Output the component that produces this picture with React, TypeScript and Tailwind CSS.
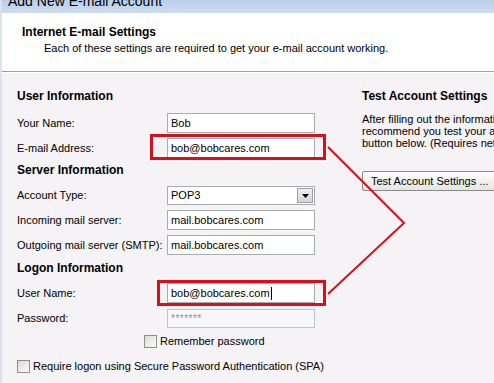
import React from 'react';

const font = { fontFamily: '"Liberation Sans", Tahoma, sans-serif' };

const Input = ({ value, caret, className = '' }: { value: string; caret?: boolean; className?: string }) => (
  <div
    className={`w-[148px] h-[20px] border border-[#a5acb2] bg-white px-[3px] flex items-center text-[11px] text-black ${className}`}
  >
    {value}
    {caret && <span className="inline-block w-px h-[13px] bg-black ml-px" />}
  </div>
);

const Checkbox = () => (
  <span className="inline-block w-[13px] h-[13px] border border-[#8f8f8f] bg-gradient-to-br from-[#dcdcd6] to-[#fbfbf9] shrink-0" />
);

const Row = ({ label, children }: { label: string; children: React.ReactNode }) => (
  <div className="flex items-center h-[20px]">
    <span className="w-[150px] text-[11px]">{label}</span>
    {children}
  </div>
);

export default function App() {
  return (
    <div
      className="w-[494px] h-[383px] overflow-hidden relative bg-[#f5f3f6] text-black border-l-2 border-[#d9e2ee]"
      style={font}
    >
      {/* title bar */}
      <div className="h-[13px] overflow-hidden bg-gradient-to-b from-[#b9cfe9] to-[#cddcf0]">
        <div className="pl-[6px] mt-[-7px] text-[14px] leading-[17px] text-black">Add New E-mail Account</div>
      </div>

      {/* header */}
      <div className="bg-white h-[59px] border-b border-[#a0a0a0] pt-[12px]">
        <div className="pl-[20px] text-[12px] font-bold leading-[14px]">Internet E-mail Settings</div>
        <div className="pl-[42px] mt-[2px] text-[11px] leading-[14px]">
          Each of these settings are required to get your e-mail account working.
        </div>
      </div>
      <div className="h-px bg-white" />

      <div className="flex">
        {/* left column */}
        <div className="w-[343px] shrink-0 pl-[15px] pt-[16px] whitespace-nowrap">
          <div className="text-[12px] font-bold leading-[14px]">User Information</div>
          <div className="mt-[10px] flex flex-col gap-[5px]">
            <Row label="Your Name:">
              <Input value="Bob" />
            </Row>
            <Row label="E-mail Address:">
              <div className="relative">
                <Input value="bob@bobcares.com" />
                <div className="absolute left-[-17px] right-[-11px] top-[-4px] bottom-[-2px] border-[3px] border-[#d8101c]" />
              </div>
            </Row>
          </div>

          <div className="mt-[5px] text-[12px] font-bold leading-[14px]">Server Information</div>
          <div className="mt-[9px] flex flex-col gap-[5px]">
            <div className="flex items-center h-[19px]">
              <span className="w-[150px] text-[11px]">Account Type:</span>
              <div className="w-[148px] h-[19px] border border-[#a5acb2] bg-white pl-[3px] flex items-center justify-between text-[11px]">
                POP3
                <span className="w-[16px] h-[15px] mr-px border border-[#a0a0a0] bg-gradient-to-b from-[#f0f0f0] to-[#d4d4d4] flex items-center justify-center">
                  <svg width="7" height="4" viewBox="0 0 7 4">
                    <path d="M0 0h7L3.5 4z" fill="#000" />
                  </svg>
                </span>
              </div>
            </div>
            <Row label="Incoming mail server:">
              <Input value="mail.bobcares.com" />
            </Row>
            <Row label="Outgoing mail server (SMTP):">
              <Input value="mail.bobcares.com" />
            </Row>
          </div>

          <div className="mt-[6px] text-[12px] font-bold leading-[14px]">Logon Information</div>
          <div className="mt-[8px] flex flex-col gap-[6px]">
            <Row label="User Name:">
              <div className="relative">
                <Input value="bob@bobcares.com" caret />
                <div className="absolute left-[-10px] right-[-11px] top-[-3px] bottom-[-3px] border-[3px] border-[#d8101c]" />
              </div>
            </Row>
            <div className="flex items-center h-[19px]">
              <span className="w-[150px] text-[11px]">Password:</span>
              <div className="w-[148px] h-[19px] border border-[#b7c4d9] bg-[#f6f7fa] px-[3px] flex items-center text-[10px] text-[#8a8f99] tracking-[0.5px]">
                *******
              </div>
            </div>
          </div>

          <div className="mt-[7px] pl-[127px] flex items-center gap-[3px] text-[11px] h-[13px]">
            <Checkbox />
            Remember password
          </div>
          <div className="mt-[12px] flex items-center gap-[3px] text-[11px] h-[13px]">
            <Checkbox />
            Require logon using Secure Password Authentication (SPA)
          </div>
        </div>

        {/* right column */}
        <div className="pl-[17px] pt-[16px] whitespace-nowrap">
          <div className="text-[12px] font-bold leading-[14px]">Test Account Settings</div>
          <div className="mt-[10px] text-[11px] leading-[12px]">
            <div>After filling out the information on this screen, we</div>
            <div>recommend you test your account by clicking the</div>
            <div>button below. (Requires network connection)</div>
          </div>
          <div className="mt-[22px] w-[150px] h-[20px] border border-[#8a8a8a] rounded-[2px] bg-gradient-to-b from-white to-[#e4e4e0] pl-[8px] flex items-center text-[11px]">
            Test Account Settings ...
          </div>
        </div>
      </div>

      {/* annotation lines */}
      <svg className="absolute left-0 top-0 pointer-events-none" width="494" height="383">
        <polyline points="326,147 402,223 326,294" fill="none" stroke="#d8101c" strokeWidth="2" />
      </svg>
    </div>
  );
}
